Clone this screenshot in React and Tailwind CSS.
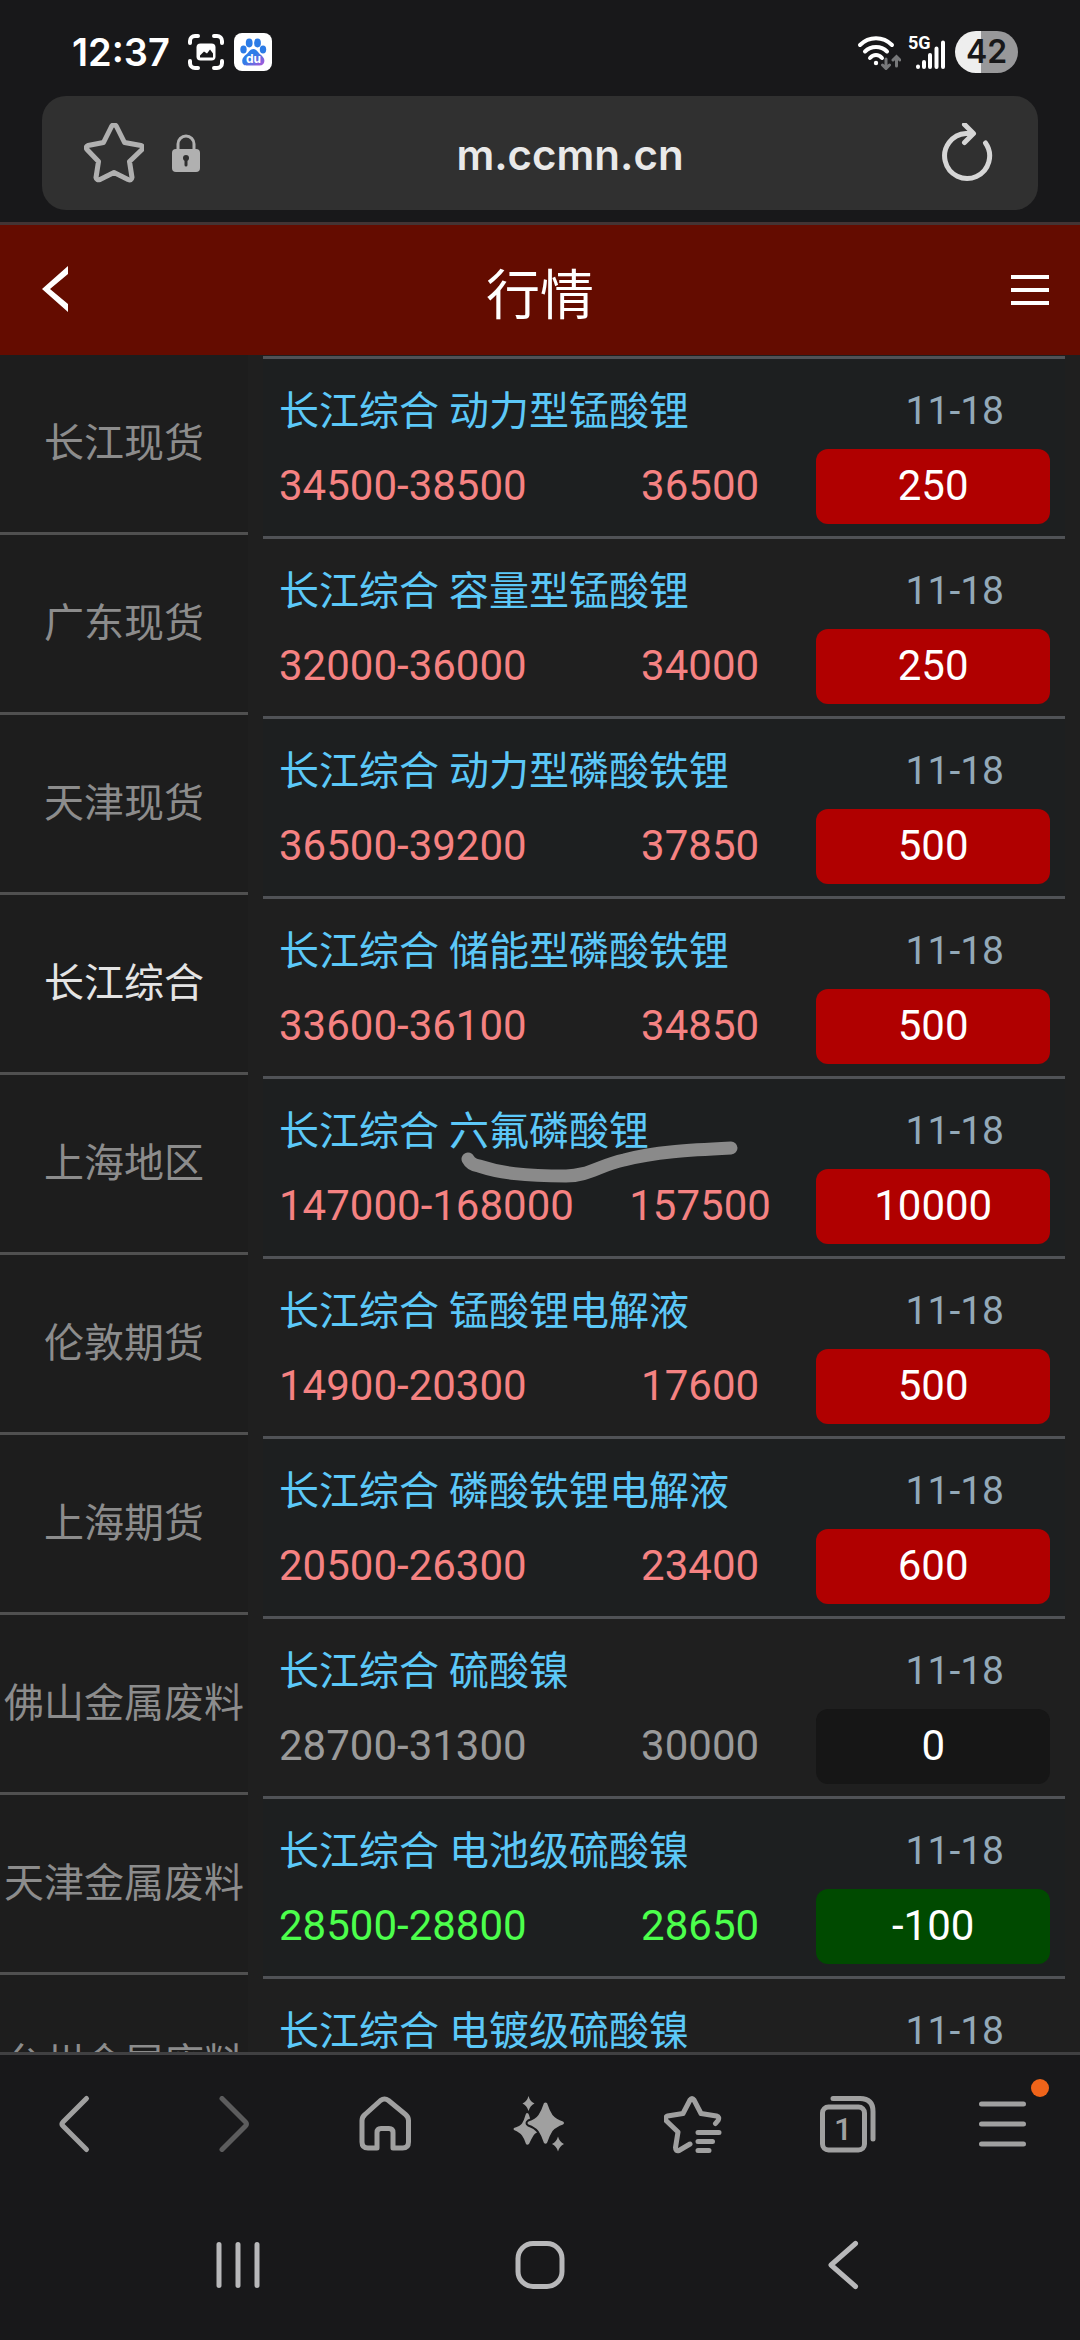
import React, { useState } from "react";

const categories = [
  "长江现货",
  "广东现货",
  "天津现货",
  "长江综合",
  "上海地区",
  "伦敦期货",
  "上海期货",
  "佛山金属废料",
  "天津金属废料",
  "台州金属废料",
];

const quotes = [
  { name: "动力型锰酸锂", range: "34500-38500", avg: 36500, change: 250 },
  { name: "容量型锰酸锂", range: "32000-36000", avg: 34000, change: 250 },
  { name: "动力型磷酸铁锂", range: "36500-39200", avg: 37850, change: 500 },
  { name: "储能型磷酸铁锂", range: "33600-36100", avg: 34850, change: 500 },
  { name: "六氟磷酸锂", range: "147000-168000", avg: 157500, change: 10000, marked: true },
  { name: "锰酸锂电解液", range: "14900-20300", avg: 17600, change: 500 },
  { name: "磷酸铁锂电解液", range: "20500-26300", avg: 23400, change: 600 },
  { name: "硫酸镍", range: "28700-31300", avg: 30000, change: 0 },
  { name: "电池级硫酸镍", range: "28500-28800", avg: 28650, change: -100 },
  { name: "电镀级硫酸镍" },
];

const priceColor = (change) => {
  if (change > 0) return "text-[#f58282]";
  if (change < 0) return "text-[#4cff4c]";
  return "text-[#9a9a9a]";
};

const badgeColor = (change) => {
  if (change > 0) return "bg-[#b00000]";
  if (change < 0) return "bg-[#004a00]";
  return "bg-[#161616]";
};

const StatusBar = () => (
  <div className="flex h-24 shrink-0 items-center justify-between pt-2 pr-[62px] pl-[72px]">
    <div className="flex items-center">
      <span className="font-['Inter'] text-[38px] leading-none font-semibold text-white">12:37</span>
      <svg viewBox="0 0 36 36" className="ml-[18px] size-9" fill="none" stroke="#fff" strokeWidth="4" strokeLinecap="round">
        <path d="M2 9V7a5 5 0 0 1 5-5h3M26 2h3a5 5 0 0 1 5 5v2M34 27v2a5 5 0 0 1-5 5h-3M10 34H7a5 5 0 0 1-5-5v-2" />
        <rect x="8.500" y="9.500" width="19" height="17" rx="4" fill="#fff" stroke="none" />
        <path d="M12 23.500v-2l4-4 3 2 3-4 3 4v4z" fill="#18181a" stroke="none" />
      </svg>
      <svg viewBox="0 0 38 38" className="ml-2.5 size-[38px]">
        <defs>
          <linearGradient id="paw" x1="0" y1="0" x2="1" y2="1">
            <stop offset="0.45" stopColor="#2f7de8" />
            <stop offset="1" stopColor="#b455d8" />
          </linearGradient>
        </defs>
        <rect width="38" height="38" rx="8" fill="#fff" />
        <g fill="#2b7be6">
          <ellipse cx="9.500" cy="16.500" rx="3.200" ry="4" />
          <ellipse cx="15.200" cy="10" rx="3.400" ry="4.400" />
          <ellipse cx="23.500" cy="10" rx="3.400" ry="4.400" />
          <ellipse cx="29" cy="16.500" rx="3.200" ry="4" />
        </g>
        <path d="M19.300 16c3 0 4.500 3 6.500 5 3 2.500 5 4.500 4.500 7.500-.5 3.500-3 4-5 4h-12c-2.500 0-5-.5-5-4-.5-3 1.500-5 4.500-7.500 2-2 3.500-5 6.500-5z" fill="url(#paw)" />
        <text x="19.500" y="30" textAnchor="middle" fill="#fff" className="font-['Inter'] text-[12px] font-bold">du</text>
      </svg>
    </div>
    <div className="flex items-center">
      <svg viewBox="0 0 44 36" className="h-9 w-11" fill="none" stroke="#fff" strokeWidth="4" strokeLinecap="round">
        <path d="M3 11c9-9 23-9 32 0M8 17.500c6-6 16-6 22 0M13 24c3.500-4 8.500-4 12 0" />
        <circle cx="19" cy="29" r="2.200" fill="#fff" stroke="none" />
        <path d="M29 25v9M25.500 31l3.500 3.500 3.500-3.500M39.500 32v-9M36 26l3.500-3.500L43 26" stroke="#77787a" strokeWidth="3" />
      </svg>
      <svg viewBox="0 0 40 40" className="ml-1.5 size-10 overflow-visible">
        <text x="1" y="17" fill="#fff" className="font-['Roboto'] text-[18px] leading-none font-bold">5G</text>
        <path d="M11 34.500v.5M17 30v5M23 23v12M29.500 16.500V35M36 10.500V35" stroke="#fff" strokeWidth="4" strokeLinecap="round" />
      </svg>
      <div className="ml-2 flex h-[42px] w-[63px] items-center justify-center rounded-full bg-linear-to-r from-[#eeeeee] from-42% to-[#98989a] to-42% font-['Inter'] text-[32px] leading-none font-semibold text-[#18181a]">
        42
      </div>
    </div>
  </div>
);

const AddressBar = () => (
  <div className="mx-[42px] mb-3 flex h-[114px] shrink-0 items-center rounded-3xl bg-[#303030] pr-[45px] pl-[42px]">
    <button aria-label="收藏">
      <svg viewBox="0 0 60 60" className="size-15" fill="none" stroke="#b0b0b0" strokeWidth="5" strokeLinejoin="round">
        <path d="M27.500 4.500q2.500-3.500 5 0l8 16 16.500 3q3 1.500 1 4L45.500 39.500l2.500 16q-.5 3.500-4 2L30 50.500l-14 7q-3.500 1-4-2l2.500-16L3 27.500q-2-2.500 1-4l15.500-3z" transform="translate(0 -1)" />
      </svg>
    </button>
    <svg viewBox="0 0 30 40" className="ml-[27px] h-10 w-[30px]">
      <path d="M7 18v-7a8 8 0 0 1 16 0v7" fill="none" stroke="#b0b0b0" strokeWidth="3" />
      <rect x="1" y="16" width="28" height="23" rx="4" fill="#b0b0b0" />
      <circle cx="15" cy="25" r="3" fill="#303030" />
      <path d="M15 25v7" stroke="#303030" strokeWidth="3" strokeLinecap="round" />
    </svg>
    <span className="flex-1 pt-1 text-center font-['Inter'] text-[42px] leading-none font-semibold text-[#e9e9e9]">m.ccmn.cn</span>
    <button aria-label="刷新">
      <svg viewBox="0 0 54 60" className="h-15 w-[54px]" fill="none" stroke="#d6d6d6" strokeWidth="5" strokeLinecap="round" strokeLinejoin="round">
        <path d="M46.500 20A22.500 22.500 0 1 1 27 10.500h7M25.500 1.500l9 9-9 9" />
      </svg>
    </button>
  </div>
);

const PageHeader = () => (
  <header className="flex h-[133px] shrink-0 items-center justify-between border-t-3 border-[#433434] bg-[#640c00] px-[31px]">
    <button aria-label="返回" className="w-12">
      <svg viewBox="0 0 48 48" className="size-12" fill="#fff">
        <path d="M37 0v8L19 23 37 38v8L11 23z" />
      </svg>
    </button>
    <h1 className="pt-3.5 text-[54px] leading-none text-white">行情</h1>
    <button aria-label="菜单" className="flex w-12 flex-col items-end gap-[9px]">
      <span className="h-1 w-[38px] bg-white" />
      <span className="h-1 w-[38px] bg-white" />
      <span className="h-1 w-[38px] bg-white" />
    </button>
  </header>
);

const Sidebar = ({ active, onSelect }) => (
  <nav className="w-[248px] shrink-0 bg-[#1d1d1d]">
    {categories.map((item) => (
      <button
        key={item}
        onClick={() => onSelect(item)}
        className={`block h-[180px] w-full border-b-3 border-[#505050] text-[40px] whitespace-nowrap ${
          item === active ? "text-[#e4e4e4]" : "text-[#8c8c8c]"
        }`}
      >
        {item}
      </button>
    ))}
  </nav>
);

const QuoteTable = () => (
  <table className="w-full table-fixed border-separate border-spacing-0">
    <colgroup>
      <col className="w-[40%]" />
      <col className="w-[29%]" />
      <col className="w-[31%]" />
    </colgroup>
    {quotes.map((q, i) => (
      <tbody key={q.name} className={i % 2 === 0 ? "bg-[#1d1f20]" : "bg-[#1f1f1f]"}>
        <tr className="h-[93px]">
          <th colSpan={2} className="relative border-t-3 border-[#505256] pt-[15px] pl-4 text-left text-[40px] leading-none font-normal whitespace-nowrap text-[#5cc8f8]">
            长江综合 {q.name}
            {/* pen stroke under the highlighted product */}
            {q.marked && (
              <svg viewBox="0 0 280 44" className="absolute top-[62px] left-[198px] h-11 w-[280px]" fill="none" stroke="#8a8a8a" strokeLinecap="round" strokeLinejoin="round">
                <path d="M4 12q3 6 11 7C36 26 60 29 102 29c22 0 34-11 58-16C190 5 225 3 267 1" strokeWidth="13" transform="translate(3 6)" />
              </svg>
            )}
          </th>
          <td className="border-t-3 border-[#505256] pt-[15px] pr-[61px] text-right text-[39px] leading-none text-[#93a9b8]">11-18</td>
        </tr>
        {q.range && (
          <tr className={`h-[87px] text-[42px] leading-none ${priceColor(q.change)}`}>
            <td className="pb-3.5 pl-4 whitespace-nowrap">{q.range}</td>
            <td className="pb-3.5 text-center">{q.avg}</td>
            <td className="pr-[15px] pb-3">
              <div className={`flex h-[75px] items-center justify-center rounded-xl pb-0.5 text-white ${badgeColor(q.change)}`}>
                {q.change}
              </div>
            </td>
          </tr>
        )}
      </tbody>
    ))}
  </table>
);

const BrowserToolbar = () => (
  <div className="grid h-[138px] grid-cols-7 place-items-center [&_svg]:size-15 [&_svg]:fill-none [&_svg]:stroke-[#a0a0a0] [&_svg]:[stroke-linecap:round] [&_svg]:[stroke-linejoin:round] [&_svg]:stroke-5">
    <button aria-label="后退">
      <svg viewBox="0 0 60 60"><path d="M39.500 4.500 16 28q-2 2 0 4l23.500 23.500" /></svg>
    </button>
    <button aria-label="前进" disabled className="opacity-50">
      <svg viewBox="0 0 60 60"><path d="M21 4.500 44.500 28q2 2 0 4L21 55.500" /></svg>
    </button>
    <button aria-label="主页">
      <svg viewBox="0 0 60 60">
        <path d="M25.500 6.500q4-3 8 0l17 14q3 2.500 3 6V48q0 6-6 6h-9.500V38.500q0-4-4-4h-8q-4 0-4 4V54h-9q-6 0-6-6V26.500q0-3.500 3-6z" transform="translate(-1 0)" />
      </svg>
    </button>
    <button aria-label="助手">
      <svg viewBox="0 0 60 60">
        <g fill="#a0a0a0" stroke="none">
          <path d="M17 19q1.500 0 2 2 1.500 6 3.500 9 2 2 12 5.500-9 2.500-11 6-2 3-4.500 8.500-2 1.500-3 0-2-6-4-8.500Q10 38.500 4 36q-1-1 0-2 6-2 8-4.500 2-3 3.500-8.500.5-2 1.500-2z" />
          <path d="M34 9q1.500-1 3 0 2.500 7.500 5.500 12 3.500 4 10.500 6.500 2 1.500 0 3-7 2.500-10.500 6.500-3 4.500-5.500 12-1.500 1.500-3 0-2.500-7.500-5.500-12-3-4-10-6.500-2-1.500 0-3 7-2.500 10-6.500 3-4.500 5.500-12z" stroke="#18181a" strokeWidth="4" paintOrder="stroke" />
          <path d="M18.500 2q1.500 5.500 6 7.500-4.500 2-6 7.500-1.500-5.500-6-7.500 4.500-2 6-7.500zM48 42.500q1.500 5.500 6 7.500-4.500 2-6 7.500-1.500-5.500-6-7.500 4.500-2 6-7.500z" />
        </g>
      </svg>
    </button>
    <button aria-label="书签">
      <svg viewBox="0 0 60 60">
        <path d="M51.500 29.500 54 26.500q2-3.500-1.500-4.500L37 19.500 30 6q-2-3-4 0l-7 13.500L3.500 22q-3 1.500-1.500 4.500L14 38l-2.500 15.500q0 4 3.500 3L26 50M34 38.500h21M34 47.500h14.500M34 56.500h11" />
      </svg>
    </button>
    <button aria-label="标签页">
      <svg viewBox="0 0 60 60">
        <rect x="3.500" y="13" width="42" height="43" rx="6" />
        <path d="M14 4.500h27q13 0 13 13V45" />
        <text x="24" y="46" textAnchor="middle" stroke="none" fill="#a0a0a0" className="font-['Roboto'] text-[32px] font-medium">1</text>
      </svg>
    </button>
    <button aria-label="更多" className="relative">
      <svg viewBox="0 0 60 60"><path d="M8.500 10h42M8.500 30h42M8.500 50h42" /></svg>
      <span className="absolute -top-[15px] -right-4 size-[18px] rounded-full bg-[#f0641a]" />
    </button>
  </div>
);

const SystemNav = () => (
  <div className="grid h-[147px] grid-cols-3 place-items-center px-[87px] pb-1 [&_svg]:size-15 [&_svg]:fill-none [&_svg]:stroke-[#b8b8ba] [&_svg]:[stroke-linecap:round] [&_svg]:[stroke-linejoin:round] [&_svg]:stroke-5">
    <button aria-label="最近任务">
      <svg viewBox="0 0 60 60"><path d="M11 9.500v41M30 9.500v41M49 9.500v41" /></svg>
    </button>
    <button aria-label="桌面">
      <svg viewBox="0 0 60 60"><rect x="8" y="8.500" width="44" height="43" rx="15" /></svg>
    </button>
    <button aria-label="系统返回">
      <svg viewBox="0 0 60 60"><path d="M43.500 8.500 19 30l24.500 21.500" /></svg>
    </button>
  </div>
);

const App = () => {
  const [active, setActive] = useState("长江综合");

  return (
    <div className="flex h-screen flex-col bg-[#18181a] font-['Roboto','Noto_Sans_CJK_SC',sans-serif]">
      <StatusBar />
      <AddressBar />
      <PageHeader />
      <main className="flex min-h-0 flex-1 items-start overflow-hidden bg-[#1f1f1f]">
        <Sidebar active={active} onSelect={setActive} />
        <div className="min-w-0 flex-1 px-[15px] pt-px">
          <QuoteTable />
        </div>
      </main>
      <footer className="shrink-0 border-t-3 border-[#404042]">
        <BrowserToolbar />
        <SystemNav />
      </footer>
    </div>
  );
};

export default App;
